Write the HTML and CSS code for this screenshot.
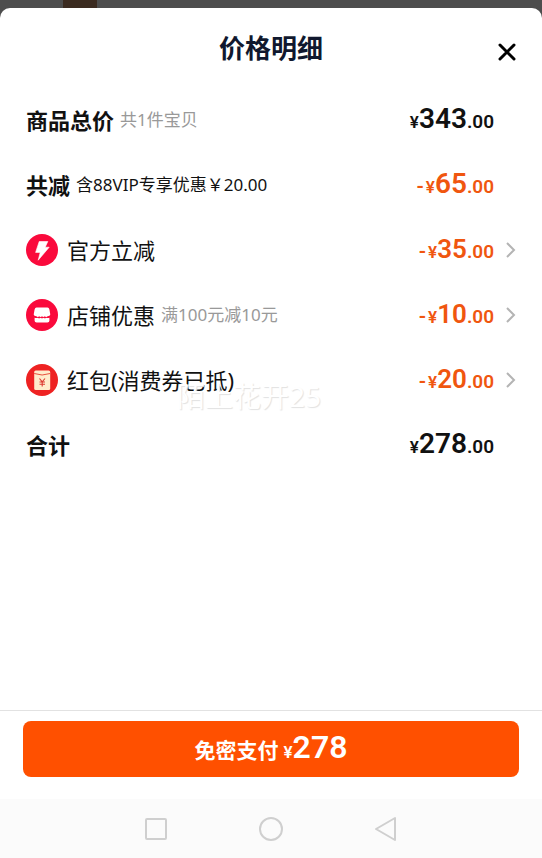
FILE: index.html
```html
<!DOCTYPE html>
<html lang="zh-CN">
<head>
<meta charset="utf-8">
<meta name="viewport" content="width=device-width, initial-scale=1">
<title>价格明细</title>
<link rel="stylesheet" href="styles.css">
</head>
<body>
<main class="sheet">
  <header class="header">
    <h1 class="title">价格明细</h1>
    <button class="close" type="button" aria-label="关闭">
      <svg width="20" height="20" viewBox="0 0 20 20" fill="none" stroke="#000" stroke-width="3" stroke-linecap="round"><path d="M3 3L17 17M17 3L3 17"/></svg>
    </button>
  </header>
  <ul class="rows">
    <li class="row">
      <span class="label strong">商品总价</span><span class="note muted">共1件宝贝</span>
      <span class="price large"><span class="yen">¥</span><span class="whole">343</span><span class="cents">.00</span></span>
    </li>
    <li class="row">
      <span class="label strong">共减</span><span class="note">含88VIP专享优惠￥20.00</span>
      <span class="price large off"><span class="minus">-</span><span class="yen">¥</span><span class="whole">65</span><span class="cents">.00</span></span>
    </li>
    <li class="row">
      <svg class="icon" viewBox="0 0 32 32"><circle cx="16" cy="16" r="16" fill="#fa0a3c"/><path d="M13.2 7.5H21.8L19.2 13.2H23.2L12.2 26.2L14.2 18.4H9.6Z" fill="#fff" stroke="#fff" stroke-width=".6" stroke-linejoin="round"/></svg>
      <span class="label">官方立减</span>
      <span class="price off"><span class="minus">-</span><span class="yen">¥</span><span class="whole">35</span><span class="cents">.00</span></span>
      <svg class="arrow" viewBox="0 0 10 16"><path d="M1 1L8 8L1 15"/></svg>
    </li>
    <li class="row">
      <svg class="icon" viewBox="0 0 32 32"><circle cx="16" cy="16" r="16" fill="#fa0a3c"/><path d="M10.5 8.5H21.5Q23 8.5 23.4 10.5L24.3 15.5Q24 17.4 21.6 17.3Q20.2 18.6 18.8 17.3Q17.4 18.6 16 17.3Q14.6 18.6 13.2 17.3Q11.8 18.6 10.4 17.3Q8 17.4 7.7 15.5L8.6 10.5Q9 8.5 10.5 8.5Z" fill="#fff"/><path d="M8.6 18.7Q10.4 19.3 11.8 18.7Q13.2 19.7 14.6 18.7Q16 19.7 17.4 18.7Q18.8 19.7 20.2 18.7Q21.6 19.5 23.4 18.7V21.8Q23.4 23.6 21.4 23.6H10.6Q8.6 23.6 8.6 21.8Z" fill="#fff"/></svg>
      <span class="label">店铺优惠</span><span class="note muted">满100元减10元</span>
      <span class="price off"><span class="minus">-</span><span class="yen">¥</span><span class="whole">10</span><span class="cents">.00</span></span>
      <svg class="arrow" viewBox="0 0 10 16"><path d="M1 1L8 8L1 15"/></svg>
    </li>
    <li class="row">
      <svg class="icon" viewBox="0 0 32 32"><circle cx="16" cy="16" r="16" fill="#ee2222"/><rect x="8.2" y="6.5" width="16" height="19.5" rx="1.5" fill="#ffeccb"/><path d="M8.2 9.5Q16 12.5 24.2 9.5" fill="none" stroke="#e8503c" stroke-width="1"/><path d="M13.5 14.5L16.2 17.8L19 14.5M16.2 17.8V22.6M13.5 18H19M13.5 20.2H19" fill="none" stroke="#dc3a30" stroke-width="1.1"/></svg>
      <span class="label">红包(消费券已抵)<span class="watermark">陌上花开25</span></span>
      <span class="price off"><span class="minus">-</span><span class="yen">¥</span><span class="whole">20</span><span class="cents">.00</span></span>
      <svg class="arrow" viewBox="0 0 10 16"><path d="M1 1L8 8L1 15"/></svg>
    </li>
    <li class="row">
      <span class="label strong">合计</span>
      <span class="price large"><span class="yen">¥</span><span class="whole">278</span><span class="cents">.00</span></span>
    </li>
  </ul>
  <footer class="footer">
    <button class="pay" type="button"><span class="paytext">免密支付</span><span class="yen">¥</span><span class="amount">278</span></button>
  </footer>
</main>
<nav class="system">
  <button class="key" type="button" aria-label="最近任务"><svg viewBox="0 0 26 26"><rect x="3" y="3" width="20" height="20" rx="1"/></svg></button>
  <button class="key" type="button" aria-label="主屏幕"><svg viewBox="0 0 26 26"><circle cx="13" cy="13" r="11"/></svg></button>
  <button class="key" type="button" aria-label="返回"><svg viewBox="0 0 26 26"><path d="M22 2V24L3 13Z"/></svg></button>
</nav>
</body>
</html>
```
FILE: styles.css
```css
* {
  box-sizing: border-box;
}

body {
  margin: 0;
  min-height: 100vh;
  padding-top: 8px;
  display: flex;
  flex-direction: column;
  background: linear-gradient(90deg, transparent 63px, #3b2b20 63px, #3b2b20 97px, transparent 97px) 0 0 / 100% 8px no-repeat, #4d4d4d;
  color: #111;
  font-family: "Noto Sans", "Noto Sans CJK SC", sans-serif;
}

button {
  border: 0;
  padding: 0;
  background: none;
  font: inherit;
  color: inherit;
}

.sheet {
  flex: 1;
  display: flex;
  flex-direction: column;
  background: #fff;
  border-radius: 10px 10px 0 0;
}

.header {
  display: grid;
  grid-template-columns: 40px 1fr 40px;
  align-items: center;
  height: 79px;
  padding: 0 15px;
}

.title {
  grid-column: 2;
  margin: 0;
  text-align: center;
  color: #10182e;
  font-size: 26px;
  line-height: 40px;
  font-weight: 700;
}

.close {
  display: grid;
  place-items: center;
  height: 40px;
  padding-top: 8px;
}

.rows {
  list-style: none;
  margin: 0;
  padding: 0 26px;
}

.row {
  display: flex;
  align-items: center;
  height: 65px;
}

.icon {
  width: 32px;
  height: 32px;
  margin-right: 9px;
  flex: none;
}

.label {
  position: relative;
  font-size: 22px;
  line-height: 32px;
  white-space: nowrap;
}

.strong {
  font-weight: 700;
}

.note {
  margin-left: 6px;
  font-size: 17px;
  line-height: 32px;
  white-space: nowrap;
}

.muted {
  color: #999;
}

.price {
  display: flex;
  align-items: baseline;
  margin-left: auto;
  margin-right: 22px;
  padding-top: 2px;
  font-family: Roboto, sans-serif;
  font-weight: 600;
  font-size: 20px;
  line-height: 32px;
}

.off {
  color: #f0560f;
}

.minus {
  margin-right: 2px;
}

.yen {
  font-size: 17px;
}

.whole {
  font-size: 26px;
}

.large .whole {
  font-size: 28px;
}

.cents {
  font-size: 19px;
}

.arrow {
  width: 10px;
  height: 16px;
  margin-left: -10px;
  flex: none;
  fill: none;
  stroke: #b4b4b4;
  stroke-width: 2;
}

.watermark {
  position: absolute;
  left: 110px;
  top: 14px;
  color: #fff;
  font-size: 28px;
  line-height: 36px;
  text-shadow: 1px 1px 1px #e2e2e2;
}

.footer {
  margin-top: auto;
  padding: 10px 23px 22px;
  border-top: 1px solid #e2e2e2;
}

.pay {
  display: flex;
  justify-content: center;
  align-items: baseline;
  width: 100%;
  padding: 6px 0 5px;
  border-radius: 8px;
  background: #ff5000;
  color: #fff;
  font-family: Roboto, "Noto Sans CJK SC", sans-serif;
  font-weight: 600;
  line-height: 40px;
}

.paytext {
  margin-right: 5px;
  font-size: 21px;
  font-weight: 700;
}

.amount {
  font-size: 32px;
}

.system {
  display: flex;
  justify-content: center;
  align-items: center;
  gap: 89px;
  height: 59px;
  background: #fbfbfb;
}

.key {
  width: 26px;
  height: 26px;
}

.key svg {
  display: block;
  fill: none;
  stroke: #cfcfcf;
  stroke-width: 2;
  stroke-linejoin: round;
}
```
